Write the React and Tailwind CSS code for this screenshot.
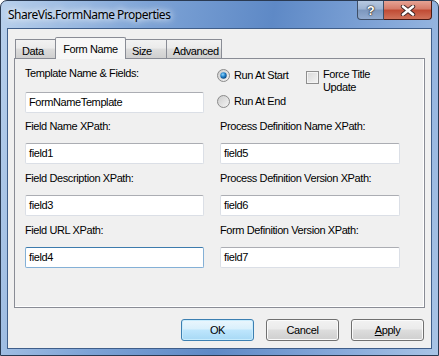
import React from 'react';

const ui = { fontFamily: '"Liberation Sans", Arial, sans-serif', letterSpacing: '-0.4px' };

// Win7 style text box
const TextBox = ({ value, hot = false }) => (
  <div
    className={`h-[21px] flex items-center pl-[3px] bg-white rounded-[2px] border text-[11px] text-black ${
      hot
        ? 'border-[#84b0d6] border-t-[#3d7bad]'
        : 'border-[#dbdfe6] border-t-[#abadb3]'
    }`}
  >
    {value}
  </div>
);

const Field = ({ label, value, hot }) => (
  <div className="flex flex-col">
    <div className="h-[13px] leading-[13px] text-[11px] text-black">{label}</div>
    <div className="mt-[10px]">
      <TextBox value={value} hot={hot} />
    </div>
  </div>
);

const Radio = ({ checked, label }) => (
  <div className="flex items-center h-[13px] gap-[4px] text-[11px] leading-[13px]">
    <svg width="13" height="13" viewBox="0 0 13 13">
      <defs>
        <linearGradient id={`rg${checked ? 1 : 0}`} x1="0" y1="0" x2="1" y2="1">
          <stop offset="0" stopColor="#cbcbcb" />
          <stop offset="1" stopColor="#f6f6f6" />
        </linearGradient>
        <radialGradient id="dot" cx="0.4" cy="0.35" r="0.7">
          <stop offset="0" stopColor="#8fd7ff" />
          <stop offset="0.55" stopColor="#1c7bc4" />
          <stop offset="1" stopColor="#0b3f73" />
        </radialGradient>
      </defs>
      <circle cx="6.5" cy="6.5" r="6" fill={`url(#rg${checked ? 1 : 0})`} stroke="#8a8a8a" />
      {checked && <circle cx="6.5" cy="6.5" r="3.2" fill="url(#dot)" />}
    </svg>
    <span>{label}</span>
  </div>
);

const Tab = ({ label, width, selected }) =>
  selected ? (
    <div
      className="relative z-10 -mx-px h-[22px] -mb-px flex justify-center pt-[5px] bg-[#f7f7f7] border border-b-0 border-[#898c95] rounded-t-[2px] text-[11px] leading-[13px]"
      style={{ width }}
    >
      {label}
    </div>
  ) : (
    <div
      className="mt-[2px] h-[19px] flex pl-[6px] pt-[5px] border border-b-0 border-[#898c95] bg-[linear-gradient(#f2f2f2,#ebebeb_45%,#dddddd_50%,#cfcfcf)] text-[11px] leading-[13px] [&+&]:-ml-px"
      style={{ width }}
    >
      {label}
    </div>
  );

const DlgButton = ({ children, primary }) => (
  <button
    className={`w-[73px] h-[22px] rounded-[3px] border text-[11px] text-black ${
      primary
        ? 'border-[#3c7fb1] bg-[linear-gradient(#eaf6fd,#d9f0fc_45%,#bee6fd_50%,#a7d9f5)] shadow-[inset_0_0_0_1px_#c8ecfd]'
        : 'border-[#707070] bg-[linear-gradient(#f2f2f2,#ebebeb_45%,#dddddd_50%,#cfcfcf)] shadow-[inset_0_0_0_1px_#fbfbfb]'
    }`}
  >
    {children}
  </button>
);

export default function App() {
  return (
    <div className="w-[439px] h-[356px] bg-white" style={ui}>
      <div className="w-full h-full flex flex-col rounded-t-[7px] border border-[#2a3a52] bg-[linear-gradient(100deg,#b8d0ec_0%,#7da3d6_30%,#5e89c6_55%,#86a9da_80%,#a9c4e6_100%)]">
        {/* title bar */}
        <div className="h-[27px] flex items-start pl-[7px]">
          <div
            className="pt-[6px] text-[12px] leading-[16px] text-black [text-shadow:0_0_6px_#fff,0_0_10px_#fff]"
            style={{ fontFamily: '"Noto Sans", "Open Sans", sans-serif', letterSpacing: '-0.5px' }}
          >
            ShareVis.FormName Properties
          </div>
          <div className="ml-auto mr-[6px] flex h-[19px]">
            <div className="w-[27px] h-full flex items-center justify-center rounded-bl-[4px] border border-t-0 border-[#3e4e66] bg-[linear-gradient(#b7c9e1,#9db3d2_45%,#7c97bd_50%,#93acd0)]">
              <span className="text-[13px] font-bold text-white leading-none [text-shadow:0_0_1px_#222,0_0_1px_#222,0_0_2px_#333]">
                ?
              </span>
            </div>
            <div className="w-[48px] h-full flex items-center justify-center rounded-br-[4px] border border-l-0 border-t-0 border-[#4a1a14] bg-[linear-gradient(#e6a395,#d67a68_45%,#c04a33_50%,#d0735b)]">
              <svg width="16" height="11" viewBox="0 0 16 11">
                <path
                  d="M3 1.5 L13 9.5 M13 1.5 L3 9.5"
                  stroke="#3b2323"
                  strokeWidth="4.4"
                  strokeLinecap="round"
                />
                <path
                  d="M3 1.5 L13 9.5 M13 1.5 L3 9.5"
                  stroke="#fff"
                  strokeWidth="2.6"
                  strokeLinecap="round"
                />
              </svg>
            </div>
          </div>
        </div>

        {/* client area */}
        <div className="flex-1 mx-[6px] mb-[6px] border border-[#3f5e8a] bg-[#f0f0f0] flex flex-col px-[6px] pt-[8px]">
          {/* tab strip */}
          <div className="flex items-start pl-[1px] h-[21px]">
            <Tab label="Data" width={41} />
            <Tab label="Form Name" width={71} selected />
            <Tab label="Size" width={42} />
            <Tab label="Advanced" width={56} />
          </div>

          {/* tab page */}
          <div className="h-[250px] border border-[#898c95] bg-[#f0f0f0] shadow-[inset_-1px_-1px_0_#fff] pl-[10px] pt-[8px]">
            <div className="grid grid-cols-[179px_180px] gap-x-[16px]">
              <div className="flex flex-col">
                <div className="h-[13px] leading-[13px] text-[11px]">Template Name &amp; Fields:</div>
                <div className="mt-[12px]">
                  <TextBox value="FormNameTemplate" />
                </div>
              </div>
              <div className="flex -ml-[3px] pt-[2px]">
                <div className="flex flex-col gap-[13px] w-[89px]">
                  <Radio checked label="Run At Start" />
                  <Radio label="Run At End" />
                </div>
                <div className="flex items-start gap-[4px] -mt-[1px]">
                  <div className="mt-[3px] w-[13px] h-[13px] border border-[#8f8f8f] bg-[linear-gradient(135deg,#d8d8d8,#f4f4f4)] shadow-[inset_0_0_0_1px_#f4f4f4]" />
                  <div className="text-[11px] leading-[13px]">
                    Force Title
                    <br />
                    Update
                  </div>
                </div>
              </div>
            </div>

            <div className="grid grid-cols-[179px_180px] gap-x-[16px] gap-y-[8px] mt-[7px]">
              <Field label="Field Name XPath:" value="field1" />
              <div className="-ml-[4px] pl-[4px]">
                <Field label="Process Definition Name XPath:" value="field5" />
              </div>
              <Field label="Field Description XPath:" value="field3" />
              <Field label="Process Definition Version XPath:" value="field6" />
              <Field label="Field URL XPath:" value="field4" hot />
              <Field label="Form Definition Version XPath:" value="field7" />
            </div>
          </div>

          {/* buttons */}
          <div className="flex justify-end gap-[12px] mt-[11px] pr-[1px]">
            <DlgButton primary>OK</DlgButton>
            <DlgButton>Cancel</DlgButton>
            <DlgButton>
              <span className="underline underline-offset-[1px]">A</span>pply
            </DlgButton>
          </div>
        </div>
      </div>
    </div>
  );
}
